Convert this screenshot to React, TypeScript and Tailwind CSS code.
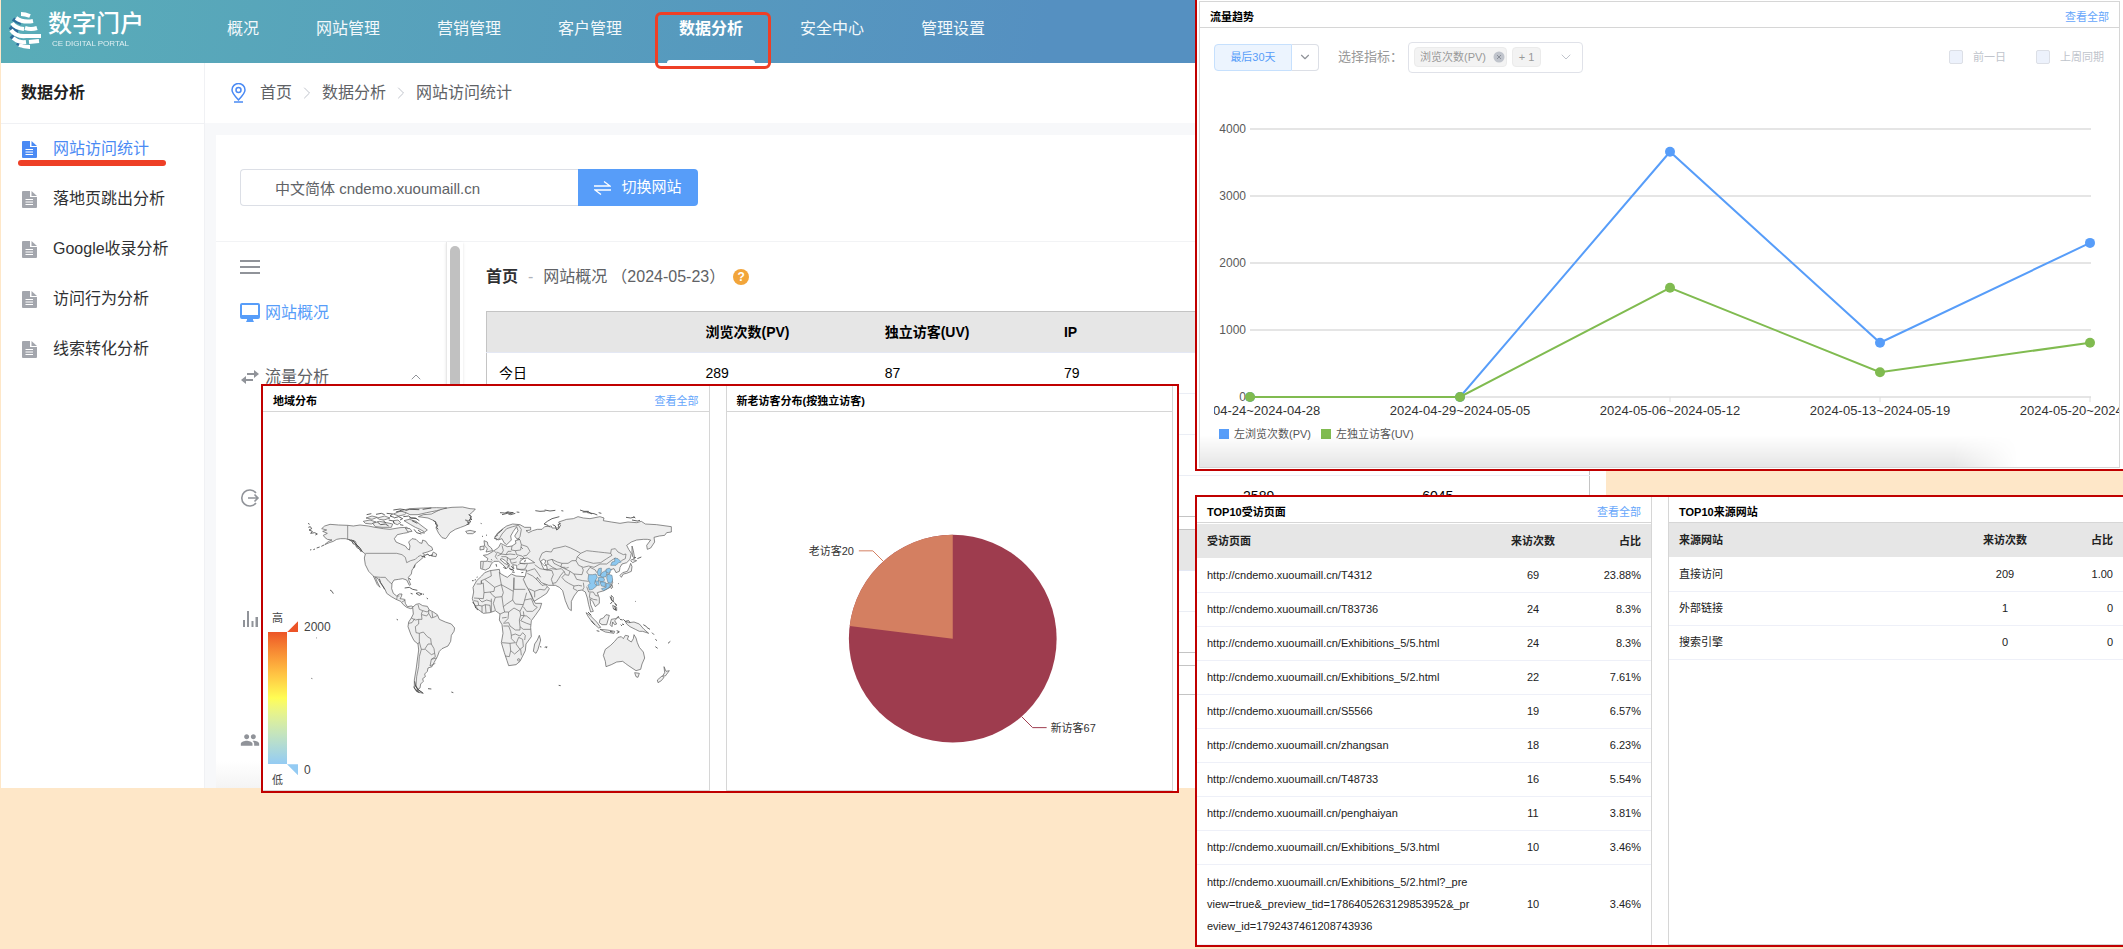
import { ChevronDown, ChevronRight, ChevronUp } from "lucide-react";
import type { ReactNode } from "react";
import { MdPeople } from "react-icons/md";

const navItems = ["概况", "网站管理", "营销管理", "客户管理", "数据分析", "安全中心", "管理设置"];
const sideItems = ["网站访问统计", "落地页跳出分析", "Google收录分析", "访问行为分析", "线索转化分析"];
const crumbs = ["首页", "数据分析", "网站访问统计"];

const overviewRows = [
  ["今日", "289", "87", "79", "", ""],
  ["", "", "", "", "", ""],
  ["", "", "", "", "", ""],
  ["", "", "", "", "2589", "6045"],
];

const visitedPages = [
  ["http://cndemo.xuoumaill.cn/T4312", "69", "23.88%"],
  ["http://cndemo.xuoumaill.cn/T83736", "24", "8.3%"],
  ["http://cndemo.xuoumaill.cn/Exhibitions_5/5.html", "24", "8.3%"],
  ["http://cndemo.xuoumaill.cn/Exhibitions_5/2.html", "22", "7.61%"],
  ["http://cndemo.xuoumaill.cn/S5566", "19", "6.57%"],
  ["http://cndemo.xuoumaill.cn/zhangsan", "18", "6.23%"],
  ["http://cndemo.xuoumaill.cn/T48733", "16", "5.54%"],
  ["http://cndemo.xuoumaill.cn/penghaiyan", "11", "3.81%"],
  ["http://cndemo.xuoumaill.cn/Exhibitions_5/3.html", "10", "3.46%"],
  [
    "http://cndemo.xuoumaill.cn/Exhibitions_5/2.html?_preview=true&_preview_tid=1786405263129853952&_preview_id=1792437461208743936",
    "10",
    "3.46%",
  ],
];

const sources = [
  ["直接访问", "209", "1.00"],
  ["外部链接", "1", "0"],
  ["搜索引擎", "0", "0"],
];

const weeks = [
  { label: "2024-04-24~2024-04-28", pv: 0, uv: 0 },
  { label: "2024-04-29~2024-05-05", pv: 0, uv: 0 },
  { label: "2024-05-06~2024-05-12", pv: 3660, uv: 1630 },
  { label: "2024-05-13~2024-05-19", pv: 810, uv: 370 },
  { label: "2024-05-20~2024-05-23", pv: 2300, uv: 810 },
];

// land masses, one polygon each
const land = [
  // north america
  "95,116 104,108 120,103 146,105 173,106 190,108 210,105 235,108 255,112 280,116 300,118 330,113 350,112 362,122 352,128 340,130 322,134 313,146 318,156 332,162 346,168 352,176 358,180 360,168 356,156 366,146 378,148 388,158 396,160 398,150 408,154 414,164 426,172 428,180 412,186 398,190 404,194 400,202 386,214 376,222 374,230 366,240 364,252 355,262 357,272 362,284 358,286 350,270 338,266 326,268 312,270 306,280 305,296 310,310 320,318 328,312 336,312 334,320 330,326 344,328 346,340 352,350 364,348 372,352 362,356 350,352 340,344 332,334 318,328 304,320 290,310 286,300 276,286 262,264 256,262 262,276 270,292 262,284 250,258 236,244 226,224 223,204 226,192 216,184 206,170 194,158 182,150 166,146 152,146 140,148 130,154 118,158 104,164 116,154 126,150 112,148 104,142 100,136 112,130 98,124 110,120",
  // greenland
  "385,80 400,74 424,72 440,64 456,56 486,52 518,51 540,56 556,57 548,66 538,74 544,82 536,92 526,90 538,98 528,106 512,112 496,118 480,128 472,140 467,146 456,143 446,130 438,114 441,102 432,92 414,84",
  "527,124 540,121 557,125 548,131 532,131",
  // south america
  "368,352 378,343 388,341 398,347 412,349 418,360 430,366 442,374 448,388 466,396 484,402 494,414 492,424 484,436 482,454 474,468 456,476 448,484 442,500 432,518 426,530 414,534 412,544 404,552 406,560 398,566 400,574 392,582 390,594 384,598 394,606 400,610 382,606 373,594 373,570 378,540 382,510 386,480 384,462 372,452 362,432 354,410 356,396 364,384 370,372",
  // africa
  "575,258 584,248 600,242 628,238 630,250 644,258 652,262 664,252 678,258 704,260 708,276 716,298 726,322 736,340 755,340 750,356 736,376 724,392 722,412 724,440 708,462 706,482 698,498 690,514 678,524 656,527 651,512 643,488 634,458 639,430 636,404 628,390 630,372 616,362 600,368 580,370 564,358 552,342 547,326 551,306 549,292 560,272",
  "748,436 752,450 744,478 738,490 730,484 734,462 742,450",
  // eurasia
  "614,142 622,130 636,118 650,108 668,102 690,104 704,112 722,112 722,120 708,122 716,128 728,122 742,118 756,118 764,110 784,108 786,114 802,114 812,108 806,96 830,88 850,86 864,80 880,84 900,86 930,80 942,84 940,92 964,96 990,100 1014,96 1040,98 1054,94 1066,102 1100,104 1144,110 1144,126 1130,128 1124,136 1108,138 1092,142 1094,156 1082,174 1072,178 1070,166 1082,150 1072,148 1060,148 1040,150 1024,156 1010,166 1016,178 1024,190 1020,208 1010,218 996,222 990,232 988,244 978,248 972,236 958,240 960,248 954,256 964,262 968,278 960,292 942,302 928,306 922,308 928,324 928,340 916,350 908,334 900,326 902,344 910,364 902,366 896,344 892,324 886,306 876,300 864,302 852,318 844,334 844,362 836,356 826,332 818,302 808,292 796,286 776,286 754,278 742,262 740,268 756,286 766,284 778,296 770,310 752,322 732,334 722,310 708,286 700,268 706,258 710,240 694,240 680,236 680,226 668,224 672,236 664,240 656,232 658,224 646,212 636,206 630,208 644,220 656,226 650,236 638,224 626,214 612,214 604,222 598,234 586,240 572,236 572,214 590,214 594,206 580,196 592,194 606,186 618,178 626,172 632,160 640,164 652,170 666,168 678,160 676,152 690,148 680,146 674,138 684,122 680,110 670,124 662,138 664,150 650,164 642,158 636,146 624,150",
  // british isles
  "582,152 592,156 594,166 604,174 608,182 588,186 592,176 584,168",
  "570,170 582,168 582,178 570,180",
  // japan, sakhalin
  "1026,168 1030,182 1034,204 1028,200 1026,186",
  "1026,208 1040,212 1028,218 1022,212",
  "1022,220 1026,230 1024,244 1010,250 1000,252 994,262 990,256 998,248 1012,244 1018,232",
  // indonesia and philippines
  "888,368 900,376 920,396 932,412 926,414 908,398 896,382",
  "930,418 952,420 974,424 972,430 946,426",
  "930,388 940,384 948,374 958,376 954,390 950,404 936,404 928,398",
  "964,388 976,386 984,382 974,392 980,402 974,404 968,396 966,410 960,404",
  "1006,394 1016,398 1032,396 1048,402 1062,418 1076,430 1058,424 1048,424 1036,418 1020,410 1010,402",
  "964,316 970,322 970,334 964,330",
  "968,346 980,352 980,362 970,356",
  "966,284 968,292 964,296 962,290",
  // australia and new zealand
  "946,478 962,466 974,454 984,442 994,440 1000,446 1006,436 1016,438 1012,448 1024,456 1030,446 1032,434 1038,444 1042,458 1048,472 1060,486 1064,504 1056,522 1052,538 1038,542 1026,534 1014,526 1006,520 998,514 980,516 964,524 948,530 946,514 940,496",
  "1034,548 1048,550 1044,562 1038,560",
  "1122,530 1128,544 1138,542 1126,558 1118,558 1124,548",
  "1116,558 1122,562 1114,572 1104,578 1102,570",
  // canadian arctic
  "220,94 240,90 258,96 244,102 226,100",
  "248,100 268,94 290,98 308,102 304,112 276,112 256,110",
  "228,84 246,78 262,82 246,88",
  "262,84 284,78 300,84 282,90 268,88",
  "310,72 330,64 352,66 344,74 326,78",
  "330,62 360,56 400,54 440,53 470,54 440,62 410,68 384,74 360,74 348,68",
  "342,92 358,88 378,94 396,108 412,120 404,126 390,118 376,112 362,104",
  "310,92 324,90 332,98 322,104 312,100",
  "346,114 360,116 366,124 354,126",
  "430,186 440,192 438,200 424,198",
];

const borders = [
  "173,106 173,148 182,150",
  "226,190 320,190 336,194 346,202 350,218 362,212 376,208 384,200 392,196 398,200",
  "250,260 272,262 286,262 296,274 306,282",
  "320,328 322,318 328,318",
  "336,336 346,330",
  // south america
  "384,344 388,358 398,362 394,372 396,388 386,388",
  "398,362 412,366 418,360",
  "396,374 410,378 416,370 416,360",
  "416,370 424,384 436,380 442,376",
  "426,366 428,382",
  "356,400 366,398 374,386",
  "364,384 376,390 386,388 386,402 376,410 378,428 388,430 388,456 384,462",
  "388,430 400,426 412,440 422,446 424,462 414,462 404,478 394,478 388,456",
  "424,462 432,476 434,490 424,494 406,478",
  "434,490 436,500 424,508 420,528 436,520",
  "424,508 440,504",
  "394,478 388,500 386,530 380,560 378,590 386,600",
  // africa
  "602,242 604,258 584,268 574,272 574,280 582,280",
  "560,282 574,282 574,272",
  "584,268 614,292 612,304 600,306 582,308 580,282",
  "552,324 580,326 582,308",
  "614,292 634,284 630,262 628,246",
  "634,284 670,304 672,264",
  "672,262 672,298 706,298",
  "634,284 640,308 636,320 616,322 608,316 600,306",
  "670,304 668,330 650,342 640,350 638,336 636,320",
  "668,330 676,342 700,344 704,330 710,308",
  "616,322 610,340 616,360",
  "552,332 564,334 566,346 556,348",
  "566,346 576,348 576,368",
  "576,348 586,344 588,368",
  "586,344 600,346 602,366",
  "604,326 604,366",
  "566,326 576,336 590,330 604,334",
  "640,350 644,366 630,372",
  "644,366 656,366 672,354 690,364 700,344",
  "704,330 724,326 732,346 742,352 728,364 710,364 700,350",
  "690,364 692,376 688,390 690,410 690,420 676,420 660,408 656,398 640,400",
  "656,366 654,386 642,398",
  "636,384 650,382",
  "692,376 710,378 722,388",
  "700,364 702,378 692,392 710,400 722,404",
  "690,410 700,418 722,418",
  "640,408 656,408 662,424 664,436 676,432 690,438 698,428",
  "636,458 660,460 676,458 664,446 664,436",
  "660,460 662,482 658,500 646,498",
  "662,482 674,492 690,478 678,462",
  "690,478 700,470 698,448 686,442 678,462",
  "698,428 706,436 704,450",
  "684,506 690,508 686,514 682,510 684,506",
  "692,478 694,496",
  // middle east
  "680,238 700,238 706,236 712,222",
  "710,244 722,240 734,236 744,250 752,262",
  "712,250 728,258 742,270",
  "716,296 734,304 750,298 764,300 772,290",
  "734,304 734,322",
  "706,222 690,220 684,226",
  "734,224 750,236 770,240 786,242 790,254 784,268 790,286",
  "770,240 784,236 800,238 814,236 822,244 812,256 806,266 798,278 788,280",
  "822,244 826,252 816,262 824,272 836,280 852,288 866,286 876,288",
  "852,288 850,296 862,302",
  "880,278 882,292 878,300",
  "890,290 896,306 910,306 916,316 924,318",
  "900,308 898,322 910,328 922,330",
  // central asia
  "748,208 756,190 768,184 784,186 790,176 810,172 826,168 842,174 858,182 872,190 862,200 858,212 846,212 834,220 816,220 802,216 786,208 772,212 774,222 764,228 752,216 748,208",
  "786,208 792,220 804,226 816,232 826,232",
  "774,222 788,232 800,238",
  "816,220 812,230 824,236 836,232",
  "872,190 890,182 908,184 926,186 944,188 962,190 966,196 950,206 932,218 910,220 888,214 872,208 862,200",
  "962,190 964,178 976,176 984,186 1000,194 1008,192 1006,206 994,212",
  "858,212 866,226 880,232 896,228 912,232 930,222 950,222 966,210 976,204",
  "824,236 840,244 852,252 876,254 880,240",
  "840,244 836,256 826,254",
  "880,240 876,232",
  "896,254 890,246 900,232 916,240 920,248",
  "852,252 860,268 878,272 896,274",
  // europe
  "618,150 628,146 636,132 650,116 668,110 684,106",
  "684,104 694,118 690,140 682,150",
  "690,150 694,164 712,170 720,184 710,196 700,198",
  "666,168 664,180 676,182 692,180 694,164",
  "676,182 680,194 696,198 706,208",
  "612,182 620,190 616,200 622,208",
  "636,166 640,182 634,192 648,194 654,184 664,184",
  "620,186 634,192 622,198",
  "648,194 660,192 676,194",
  "634,200 648,200 660,208 676,206 684,198",
  "660,208 664,220 680,216",
  "652,202 652,214",
  "580,216 578,236",
  "592,214 606,216",
  "690,206 702,206",
];

// provinces with visits
const visited = [
  "974,204 984,206 994,216 986,218 978,226 962,226 966,216 974,214",
  "896,254 908,254 918,252 922,262 916,272 914,280 920,288 908,298 898,300 894,286 900,280 894,268",
  "926,236 934,234 934,246 930,258 924,256 922,246",
  "936,248 946,242 952,246 948,260 938,262 930,258",
  "948,238 958,234 964,240 956,250 948,246",
  "926,262 940,262 944,270 938,276 924,272",
  "952,252 966,256 968,270 964,280 954,278 950,264",
  "930,276 946,276 946,290 934,288",
  "948,280 962,282 956,294 940,302 934,296 948,292",
  "916,272 926,274 928,286 920,286",
];

const coastDetail =
  "M178 150l8 4 3 7 7 2 4 9 8 5 6 9M184 149l10 8 7 10 8 6 8 12M188 151l6 2 4 5M198 160l4 9 6 3M536 74l8 5-4 5 6 4-8 2 4 6-9 1 5 5-8 2M430 92l8 4-2 6 7 4-3 7 5 5M374 574l3 14 6 8-3 5 8 3M377 586l4 10 12 9 5 3M371 590l7 12 10 6M395 200l8-2 2 6M405 196l9-4 3 5 12-2M374 226l-3 8M55 112l6-2 4 6-8 4 10 4-5 6 12-2 8 4-6 3M54 100l5 3M60 180l4-1M70 179l5-2M80 174l9-3M94 169l8-4M230 74l14-3M258 73l16-3 10 4M290 70l18 2-8 6 12 4M312 84l14-4 12 6-8 4M340 80l16-2 8 6 16 2M296 90l14 3 2 7M330 104l10 2M358 84l18 0 12 8M366 92l16 8M318 66l14-4M384 120l10 8 10 1M372 118l8 10 14 4M280 92l8 8M262 96l10 8 14-2 10 6M310 60l20-3 14 2M346 62l12-4 30 1M398 58l26-4M268 266l4 12 8 12 4 8M344 294l14-2 10 6 14 3M378 310l8-2 10 4-8 4zM362 310l6 2M410 324l4 3M398 312l4 1M358 264l4 6M630 68l14 1 12-3M636 74l16-4 10 4 14-4M650 66l20 2-14 4M680 66l8 1M736 62l14 2 16-1M764 60l16 3 16-2M870 60l12 4 14 0M878 66l18 0 10 6M892 68l20 3 10 4M1008 82l14 2 12-3M1026 90l16 3 8-2M1030 80l6 4M762 102l10-8 14-8 22-6M762 102l12 4 6 6M1030 206l8-4M1042 206l12-5M926 68l8 2M814 62l6 1M788 104l8 4 4 12 8-6-4-10 8-4M120 300l6 4 4 7M320 388l4 2M78 443l2 1M64 565l3 1M414 596l10 1M484 606l6 2M806 586l6 1M750 470l4 1M764 472l6-2M768 474l4-3M1096 448l5 4M1096 470l7 5M1134 460l7-6M1086 428l6 6M1060 404l10 6M1070 412l10 6M1036 334l2 1M984 280l2 1M572 100l3 1M588 136l3-1M576 138l3 2M546 272l5 0M554 270l4-1M560 262l3-1M548 336l6 8 3 10 7 6M706 210l-2 6M604 208l2 3M640 232l8 4M618 222l2 8M666 246l8 1M694 248l6-1M960 320l6 12 6 4M972 338l8 6M966 336l-5 6M974 348l4 12-8-4M976 342l4 6M984 378l4 8M990 388l8 2M992 404l4 4M980 422l8 3M988 426l-8 4M960 424l8 2M996 402l6 2M1000 388l6 6 10-2 4 6M904 392l10 12M894 366l10 10M920 422l8 2M664 228l6 8M658 236l10 4M668 240l4 3M650 218l6 4M694 172l4 4M622 132l10-8 6-6M616 140l8-6M612 144l8 4";

function Monitor() {
  return (
    <svg viewBox="0 0 20 20" className="h-5 w-5" fill="currentColor" aria-hidden="true">
      <path d="M2 0h16a2 2 0 0 1 2 2v12a2 2 0 0 1-2 2H2a2 2 0 0 1-2-2V2a2 2 0 0 1 2-2zm0 2v10h16V2z" fillRule="evenodd" />
      <path d="M7 16h6v1l1 2H6l1-2z" />
    </svg>
  );
}

function SwapBold() {
  return (
    <svg viewBox="0 0 20 16" className="h-4 w-5" fill="#909399" aria-hidden="true">
      <path d="M7 4h7V1l5 4-5 4V6H7zM13 10H6V7l-5 4 5 4v-3h7z" />
    </svg>
  );
}

function ExitIcon() {
  return (
    <svg viewBox="0 0 18 18" className="h-[18px] w-5" fill="none" stroke="#909399" strokeWidth="1.6" aria-hidden="true">
      <path d="M15 4A8 8 0 1 0 15 14M7 9h10M13.500 5.500L17 9l-3.500 3.500" />
    </svg>
  );
}

function Bars() {
  return (
    <svg viewBox="0 0 18 18" className="h-[18px] w-5" fill="#909399" aria-hidden="true">
      <path d="M2 10h2v7H2zM6 1h2v16H6zM10.500 11h2v6h-2zM14.500 7h2.500v10h-2.500z" />
    </svg>
  );
}

function FileIcon({ active }: { active: boolean }) {
  return (
    <svg viewBox="0 0 15 17" className="h-[17px] w-[15px] shrink-0" fill={active ? "#4a8af4" : "#a3a6ad"} aria-hidden="true">
      <path d="M1 0h7v6h7v10a1 1 0 0 1-1 1H1a1 1 0 0 1-1-1V1a1 1 0 0 1 1-1z" />
      <path d="M9.500 0L15 5H9.500z" />
      <path d="M3.500 8.500h7.500M3.500 11h7.500M3.500 13.500h7.500" stroke="#fff" strokeWidth="1" />
    </svg>
  );
}

function Logo() {
  return (
    <a href="#" className="flex w-[140px] items-center gap-[6px] pb-1 text-white">
      <svg viewBox="0 0 33 38" className="h-[38px] w-[33px] shrink-0" fill="none" aria-hidden="true">
        <g stroke="#2d6c9c" strokeWidth="4">
          <path d="M4 8q4 3 8 4M1 16q4 4 8 5M2 25q4 4 8 5M8 32l6 3" />
        </g>
        <g stroke="#fff" strokeWidth="4">
          <path d="M12 3q4 0 9 2" />
          <path d="M7 7q7 5 17 3" />
          <path d="M3 12q3 5 12 6" />
          <path d="M16 17q6 2 12 0" />
          <path d="M2 19q5 7 15 6h15" />
          <path d="M4 27q6 5 13 4" />
          <path d="M20 31l10-1" />
          <path d="M10 34q5 2 11 2" />
        </g>
      </svg>
      <span className="flex flex-col">
        <span className="text-2xl leading-7 font-medium whitespace-nowrap">数字门户</span>
        <span className="pl-1 text-[8px] leading-3 whitespace-nowrap opacity-80">CE DIGITAL PORTAL</span>
      </span>
    </a>
  );
}

function Card({ title, more, className = "", children }: { title: string; more?: boolean; className?: string; children?: ReactNode }) {
  return (
    <section className={`flex min-w-0 flex-col border-[#d6d6d6] ${className}`}>
      <header className="flex h-[26px] shrink-0 items-center justify-between border-b border-[#d6d6d6] px-[10px] pt-[6px] text-[11px]">
        <h2 className="font-bold text-black">{title}</h2>
        {more && (
          <a href="#" className="text-[#66a6fb]">
            查看全部
          </a>
        )}
      </header>
      {children}
    </section>
  );
}

function TrendChart() {
  const x = (i: number) => 36 + i * 210;
  const y = (v: number) => 317 - v * 0.067;
  return (
    <svg viewBox="0 0 905 339" className="block w-full" fontSize="12" role="img" aria-label="流量趋势">
      {[0, 1000, 2000, 3000, 4000].map((v) => (
        <g key={v}>
          <path d={`M36 ${y(v)}H877`} stroke="#dcdcdc" strokeWidth="1.500" />
          <text x="32" y={y(v) + 4} textAnchor="end" fill="#5a5a5a">
            {v}
          </text>
        </g>
      ))}
      {weeks.map((w, i) => (
        <g key={w.label}>
          <path d={`M${x(i)} 317v5`} stroke="#dcdcdc" />
          <text x={x(i)} y="335" fontSize="13" textAnchor="middle" fill="#333">
            {w.label}
          </text>
        </g>
      ))}
      <polyline points={weeks.map((w, i) => `${x(i)},${y(w.pv)}`).join(" ")} fill="none" stroke="#579df9" strokeWidth="2" />
      {weeks.map((w, i) => (
        <circle key={w.label} cx={x(i)} cy={y(w.pv)} r="5" fill="#579df9" />
      ))}
      <polyline points={weeks.map((w, i) => `${x(i)},${y(w.uv)}`).join(" ")} fill="none" stroke="#80bb50" strokeWidth="2" />
      {weeks.map((w, i) => (
        <circle key={w.label} cx={x(i)} cy={y(w.uv)} r="5" fill="#80bb50" />
      ))}
    </svg>
  );
}

function WorldMap() {
  return (
    <svg viewBox="0 0 1170 660" className="h-[220px] w-[390px]" strokeLinejoin="round" role="img" aria-label="地域分布">
      <g fill="#eee" stroke="#555" strokeWidth="2">
        {land.map((p) => (
          <polygon key={p} points={p} />
        ))}
      </g>
      {/* inland seas */}
      <g fill="#fff" stroke="#555" strokeWidth="2">
        <polygon points="690,214 700,206 712,204 722,210 734,218 716,220 700,220 690,220" />
        <polygon points="752,214 760,208 768,212 764,220 770,228 772,238 762,238 756,226" />
      </g>
      <g fill="none" stroke="#666" strokeWidth="2">
        {borders.map((p) => (
          <polyline key={p} points={p} />
        ))}
      </g>
      <g fill="#8cc8f0" stroke="#5a6a75" strokeWidth="1.500">
        {visited.map((p) => (
          <polygon key={p} points={p} />
        ))}
      </g>
      <path d={coastDetail} fill="none" stroke="#444" strokeWidth="2.500" />
    </svg>
  );
}

function VisitorPie() {
  return (
    <svg viewBox="0 0 446 378" className="block w-full" fontSize="11" fill="none" role="img" aria-label="新老访客分布">
      <circle cx="226" cy="227" r="104" fill="#9e3c4e" />
      <path d="M226 227V123A104 104 0 0 0 122.800 214.200z" fill="#d47f61" />
      <path d="M132 139h14l11 11" stroke="#d47f61" />
      <path d="M295 305l11 11h14" stroke="#9e3c4e" />
      <text x="127" y="143" textAnchor="end" fill="#333">
        老访客20
      </text>
      <text x="324" y="320" fill="#333">
        新访客67
      </text>
    </svg>
  );
}

function RankTable({ head, rows }: { head: string[]; rows: string[][] }) {
  return (
    <table className="w-full table-fixed text-[11px] leading-[22px] text-[#222]">
      <colgroup>
        <col className="w-[280px]" />
        <col className="w-28" />
        <col />
      </colgroup>
      <thead>
        <tr className="h-[34px] bg-[#e6e6e6] text-[#222]">
          <th className="pl-[10px] text-left">{head[0]}</th>
          <th className="text-center">{head[1]}</th>
          <th className="pr-[10px] text-right">{head[2]}</th>
        </tr>
      </thead>
      <tbody>
        {rows.map(([name, count, rate]) => (
          <tr key={name} className="h-[34px] border-b border-[#eef0f8] nth-10:h-20">
            <td className="py-[5px] pr-[6px] pl-[10px] break-all">{name}</td>
            <td className="text-center">{count}</td>
            <td className="pr-[10px] text-right">{rate}</td>
          </tr>
        ))}
      </tbody>
    </table>
  );
}

function OverviewTable({ head, rows }: { head: string[]; rows: string[][] }) {
  return (
    <table className="w-full table-fixed border border-[#c4c4c4] text-sm text-black">
      <colgroup>
        <col className="w-[207px]" />
        <col span={5} />
      </colgroup>
      <thead>
        <tr className="h-[41px] border-b border-[#e4e8f4] bg-[#e6e6e6] text-left">
          {head.map((h, i) => (
            <th key={i} className="px-3">
              {h}
            </th>
          ))}
        </tr>
      </thead>
      <tbody>
        {rows.map((row, r) => (
          <tr key={r} className="h-[41px] border-b border-[#ebeef5] last:border-[#c4c4c4]">
            {row.map((cell, i) => (
              <td key={i} className="px-3">
                {cell}
              </td>
            ))}
          </tr>
        ))}
      </tbody>
    </table>
  );
}

function Console() {
  return (
    <div className="ml-px w-[1605px] overflow-hidden bg-white">
      <header className="flex h-[63px] bg-[linear-gradient(100deg,#59adb8,#5590c1_65%)] pl-2 text-base text-[#f2f8fb]">
        <Logo />
        <nav className="relative z-10 ml-[78px] flex gap-[57px]">
          {navItems.map((item) =>
            item === "数据分析" ? (
              <a key={item} href="#" className="relative block pt-[17px] font-bold text-white">
                {item}
                <span className="absolute -inset-x-3 bottom-0 h-[3px] rounded-t bg-white" />
                <span className="absolute top-3 -right-7 -bottom-[6px] -left-6 rounded-md border-[3px] border-[#ee3f26]" />
              </a>
            ) : (
              <a key={item} href="#" className="block pt-[17px]">
                {item}
              </a>
            ),
          )}
        </nav>
      </header>

      <div className="flex">
        <aside className="w-[204px] shrink-0 border-r border-[#f0f1f4] text-base">
          <h1 className="flex h-[61px] items-center border-b border-[#f0f1f4] pl-5 font-bold text-[#222]">数据分析</h1>
          <ul>
            {sideItems.map((item, i) => (
              <li key={item}>
                <a href="#" className={`relative flex h-[50px] items-center gap-4 pl-[21px] ${i === 0 ? "text-[#4a8af4]" : "text-[#303133]"}`}>
                  <FileIcon active={i === 0} />
                  {item}
                  {i === 0 && <span className="absolute bottom-2 left-[17px] h-[6px] w-[148px] rounded-sm bg-[#ee3f26]" />}
                </a>
              </li>
            ))}
          </ul>
        </aside>

        <div className="min-w-0 flex-1">
          <nav className="flex h-[60px] items-center pl-[26px] text-base text-[#606266]">
            <svg viewBox="0 0 15 20" className="mr-[14px] h-5 w-[15px]" fill="none" stroke="#4a8af4" strokeWidth="1.500" aria-hidden="true">
              <path d="M7.500 17C3 12 1 10 1 7a6.500 6.500 0 0 1 13 0c0 3-2 5-6.500 10zM3 19h9" />
              <circle cx="7.500" cy="7" r="2.500" />
            </svg>
            {crumbs.map((c, i) => (
              <span key={c} className="flex items-center">
                {i > 0 && <ChevronRight className="mx-[5px] h-5 w-5 text-[#c0c4cc]" strokeWidth={1.2} />}
                <a href="#">{c}</a>
              </span>
            ))}
          </nav>

          <div className="bg-[#f7f8fa] pt-3 pl-[11px]">
            <div className="bg-white">
              <form className="flex h-[107px] items-start border-b border-[#f2f3f5] pt-[34px] pl-6">
                <input
                  aria-label="网站"
                  defaultValue="中文简体 cndemo.xuoumaill.cn"
                  className="h-[37px] w-[338px] rounded-l border border-r-0 border-[#dcdfe6] px-[34px] text-[15px] text-[#606266]"
                />
                <button type="button" className="flex h-[37px] w-[120px] items-center justify-center gap-[10px] rounded-r bg-[#579df9] text-[15px] text-white">
                  <svg viewBox="0 0 17 14" className="h-[14px] w-[17px]" fill="none" stroke="currentColor" strokeWidth="1.300" aria-hidden="true">
                    <path d="M0 5h16l-6-4.500M17 9H1l6 4.500" />
                  </svg>
                  切换网站
                </button>
              </form>

              <div className="flex">
                <div className="w-[230px] shrink-0 bg-linear-to-b from-white from-95% to-[#f4f4f4] pt-[18px] pb-9 pl-6 text-base text-[#606266]">
                  <button type="button" aria-label="菜单" className="flex w-5 flex-col gap-1">
                    <span className="h-[2px] w-full bg-[#909399]" />
                    <span className="h-[2px] w-full bg-[#909399]" />
                    <span className="h-[2px] w-full bg-[#909399]" />
                  </button>
                  <a href="#" className="mt-[27px] flex h-6 items-center gap-[5px] text-[#579df9]">
                    <Monitor />
                    网站概况
                  </a>
                  <a href="#" className="mt-10 flex h-6 items-center gap-[5px]">
                    <SwapBold />
                    流量分析
                    <ChevronUp className="ml-[74px] h-4 w-4 text-[#909399]" strokeWidth={1.5} />
                  </a>
                  <a href="#" aria-label="来源" className="mt-[97px] flex h-6 items-center">
                    <ExitIcon />
                  </a>
                  <a href="#" aria-label="报表" className="mt-[97px] flex h-6 items-center">
                    <Bars />
                  </a>
                  <a href="#" aria-label="访客" className="mt-[97px] flex h-6 items-center">
                    <MdPeople className="h-5 w-5 text-[#909399]" />
                  </a>
                </div>
                <div className="w-[17px] shrink-0 border-l border-[#e8e8e8] px-[3px] pt-1 shadow-sm">
                  <div className="h-96 w-[10px] rounded-full bg-[#c1c1c1]" />
                </div>

                <div className="min-w-0 flex-1 pt-[22px] pr-4 pl-[23px]">
                  <h2 className="flex h-[26px] items-center text-base text-[#606266]">
                    <b className="text-[#303133]">首页</b>
                    <span className="mx-[10px] text-[#b0b3bb]">-</span>
                    网站概况
                    <span className="ml-1">（2024-05-23）</span>
                    <span className="ml-2 flex h-4 w-4 items-center justify-center rounded-full bg-[#f2a53a] text-xs font-bold text-white">?</span>
                  </h2>
                  <div className="mt-[21px] flex flex-col gap-3">
                    <OverviewTable head={["", "浏览次数(PV)", "独立访客(UV)", "IP", "", ""]} rows={overviewRows} />
                    <OverviewTable head={["", "", "", "", "", ""]} rows={overviewRows.slice(1, 3)} />
                    <div className="h-[30px] border-y border-[#c4c4c4]" />
                  </div>
                </div>
              </div>
            </div>
          </div>
        </div>
      </div>
    </div>
  );
}

function RegionPanel() {
  return (
    <div className="absolute top-[384px] left-[261px] flex h-[409px] w-[918px] gap-4 border-2 border-[#c00000] bg-white pr-1">
      <Card title="地域分布" more className="flex-1 border-r border-b">
        <div className="relative flex flex-1">
          <div className="mt-[78px] ml-[27px]">
            <WorldMap />
          </div>
          <div className="absolute bottom-[2px] left-[5px] flex flex-col text-xs text-[#444]">
            <span className="pl-1 text-[11px]">高</span>
            <div className="mt-[7px] flex">
              <div className="h-[132px] w-[19px] bg-linear-to-b from-[#ec5427] via-[#fffd54] to-[#94cbf3]" />
              <div className="-my-[11px] flex flex-col justify-between">
                <span className="flex h-[11px] items-center gap-[6px]">
                  <i className="h-[11px] w-[11px] bg-[#ec5427] [clip-path:polygon(100%_0,100%_100%,0_100%)]" />
                  2000
                </span>
                <span className="flex h-[11px] items-center gap-[6px]">
                  <i className="h-[11px] w-[11px] bg-[#94cbf3] [clip-path:polygon(0_0,100%_0,100%_100%)]" />0
                </span>
              </div>
            </div>
            <span className="mt-[9px] pl-1 text-[11px]">低</span>
          </div>
        </div>
      </Card>
      <Card title="新老访客分布(按独立访客)" className="flex-1 border-x border-b">
        <VisitorPie />
      </Card>
    </div>
  );
}

function TrendPanel() {
  return (
    <div className="absolute top-0 right-0 left-[1195px] border-b-2 border-l-2 border-[#c00000] bg-white pt-px pr-[3px] pb-px pl-[2px]">
      <Card title="流量趋势" more className="relative border">
        <div className="flex h-[52px] items-center pt-[6px] pr-[15px] pl-[14px] text-[11px]">
          <button type="button" className="h-[27px] w-[78px] rounded-l border border-[#c6e0fd] bg-[#ecf4fe] text-[#579df9]">
            最后30天
          </button>
          <button type="button" aria-label="选择时间" className="flex h-[27px] w-[27px] items-center justify-center rounded-r border border-l-0 border-[#dcdfe6] text-[#909399]">
            <ChevronDown className="h-[14px] w-[14px]" strokeWidth={2} />
          </button>
          <span className="ml-[19px] text-[13px] text-[#999]">选择指标：</span>
          <button
            type="button"
            aria-label="选择指标"
            className="ml-[5px] flex h-[31px] w-[175px] items-center gap-[5px] rounded border border-[#e0e2e9] px-[5px] text-[#999]"
          >
            <span className="flex h-5 w-[93px] items-center justify-between rounded border border-[#ebebeb] bg-[#f3f3f3] pr-px pl-[5px]">
              浏览次数(PV)
              <svg viewBox="0 0 12 12" className="h-3 w-3" aria-hidden="true">
                <circle cx="6" cy="6" r="5.500" fill="#c0c4cc" />
                <path d="M4 4l4 4M8 4l-4 4" stroke="#8a8f99" />
              </svg>
            </span>
            <span className="flex h-5 w-[29px] items-center justify-center rounded border border-[#ebebeb] bg-[#f3f3f3]">+ 1</span>
            <ChevronDown className="mr-[3px] ml-auto h-4 w-4 text-[#c0c4cc]" strokeWidth={1.5} />
          </button>
          <label className="ml-auto flex items-center gap-[10px] text-[#c0c4cc]">
            <input type="checkbox" className="h-[14px] w-[14px] appearance-none rounded-xs border border-[#dcdfe6] bg-[#edf2fc]" />
            前一日
          </label>
          <label className="ml-[30px] flex items-center gap-[10px] text-[#c0c4cc]">
            <input type="checkbox" className="h-[14px] w-[14px] appearance-none rounded-xs border border-[#dcdfe6] bg-[#edf2fc]" />
            上周同期
          </label>
        </div>
        <div className="pl-[14px]">
          <TrendChart />
        </div>
        <div className="flex h-12 items-start gap-[10px] pt-[6px] pl-[19px] text-[11px] leading-[18px] text-[#555]">
          <span className="flex items-center gap-[5px]">
            <i className="h-[10px] w-[10px] bg-[#579df9]" />
            左浏览次数(PV)
          </span>
          <span className="flex items-center gap-[5px]">
            <i className="h-[10px] w-[10px] bg-[#80bb50]" />
            左独立访客(UV)
          </span>
        </div>
        <div className="pointer-events-none absolute inset-x-0 bottom-0 h-8 bg-linear-to-b from-transparent to-black/10 [mask-image:linear-gradient(to_right,black_82%,transparent_89%)]" />
      </Card>
    </div>
  );
}

function RankPanel() {
  return (
    <div className="absolute top-[495px] right-0 left-[1195px] flex gap-4 border-y-2 border-l-2 border-[#c00000] bg-white">
      <Card title="TOP10受访页面" more className="flex-1 border-r">
        <div className="pt-px">
          <RankTable head={["受访页面", "来访次数", "占比"]} rows={visitedPages} />
        </div>
      </Card>
      <Card title="TOP10来源网站" className="flex-1 border-b border-l">
        <RankTable head={["来源网站", "来访次数", "占比"]} rows={sources} />
      </Card>
    </div>
  );
}

export default function App() {
  return (
    <main className="relative min-h-screen overflow-hidden bg-[#fee7c8] font-['Liberation_Sans','Noto_Sans_CJK_SC',sans-serif]">
      <Console />
      <RegionPanel />
      <TrendPanel />
      <RankPanel />
    </main>
  );
}
